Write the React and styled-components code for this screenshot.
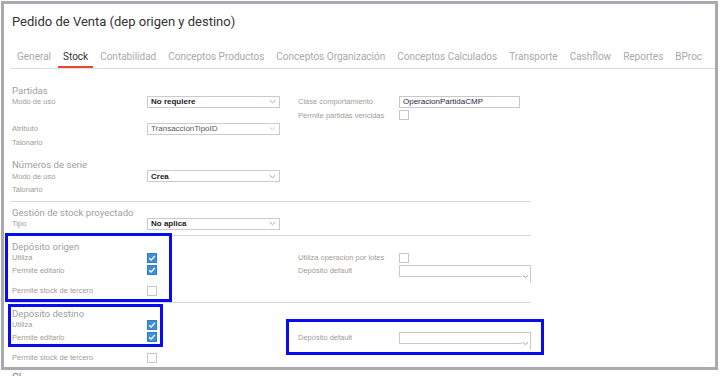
import React from "react";
import styled, { createGlobalStyle } from "styled-components";

const GlobalStyle = createGlobalStyle`
  html, body {
    margin: 0;
    padding: 0;
    background: #fff;
    overflow: hidden;
    font-family: Roboto, "Liberation Sans", sans-serif;
  }
`;

const TABS = [
  "General",
  "Stock",
  "Contabilidad",
  "Conceptos Productos",
  "Conceptos Organización",
  "Conceptos Calculados",
  "Transporte",
  "Cashflow",
  "Reportes",
  "BProc",
];

const Chevron = ({ light }) => (
  <svg width="7" height="5" viewBox="0 0 7 5">
    <path
      d="M0.8 1.2 L3.5 3.7 L6.2 1.2"
      fill="none"
      stroke={light ? "#b9cde4" : "#7ea8d8"}
      strokeWidth="1"
    />
  </svg>
);

const Check = () => (
  <svg width="8" height="8" viewBox="0 0 8 8">
    <path d="M1.2 4.2 L3.2 6 L6.9 1.9" fill="none" stroke="#fff" strokeWidth="1.3" />
  </svg>
);

const App = () => {
  return (
    <>
      <GlobalStyle />
      <Frame>
        <Title>Pedido de Venta (dep origen y destino)</Title>

        <TabList>
          {TABS.map((t) => (
            <Tab key={t} $active={t === "Stock"}>
              {t}
            </Tab>
          ))}
        </TabList>

        <Content>
          <Section>
            <SectionTitle>Partidas</SectionTitle>
            <Rows>
              <FieldRow>
                <Label>Modo de uso</Label>
                <Select $strong>
                  No requiere
                  <Chevron />
                </Select>
                <span />
                <Label>Clase comportamiento</Label>
                <TextInput>OperacionPartidaCMP</TextInput>
              </FieldRow>
              <FieldRow>
                <span />
                <span />
                <span />
                <Label>Permite partidas vencidas</Label>
                <Checkbox />
              </FieldRow>
              <FieldRow>
                <Label>Atributo</Label>
                <Select $muted>
                  TransaccionTipoID
                  <Chevron light />
                </Select>
              </FieldRow>
              <FieldRow>
                <Label>Talonario</Label>
              </FieldRow>
            </Rows>
          </Section>

          <Section $divided>
            <SectionTitle>Números de serie</SectionTitle>
            <Rows>
              <FieldRow>
                <Label>Modo de uso</Label>
                <Select $strong>
                  Crea
                  <Chevron />
                </Select>
              </FieldRow>
              <FieldRow>
                <Label>Talonario</Label>
              </FieldRow>
            </Rows>
          </Section>

          <Section $divided>
            <SectionTitle>Gestión de stock proyectado</SectionTitle>
            <Rows>
              <FieldRow>
                <Label>Tipo</Label>
                <Select $strong>
                  No aplica
                  <Chevron />
                </Select>
              </FieldRow>
            </Rows>
          </Section>

          <Section $divided>
            <SectionTitle>Depósito origen</SectionTitle>
            <Rows>
              <FieldRow>
                <Label>Utiliza</Label>
                <Checkbox $checked>
                  <Check />
                </Checkbox>
                <span />
                <Label>Utiliza operacion por lotes</Label>
                <Checkbox />
              </FieldRow>
              <FieldRow $top>
                <Label>Permite editarlo</Label>
                <Checkbox $checked>
                  <Check />
                </Checkbox>
                <span />
                <Label>Depósito default</Label>
                <TallSelect>
                  <TallBox />
                  <TallChevron>
                    <Chevron />
                  </TallChevron>
                </TallSelect>
              </FieldRow>
              <FieldRow>
                <Label>Permite stock de tercero</Label>
                <Checkbox />
              </FieldRow>
            </Rows>
          </Section>

          <Section>
            <SectionTitle>Depósito destino</SectionTitle>
            <Rows>
              <FieldRow>
                <Label>Utiliza</Label>
                <Checkbox $checked>
                  <Check />
                </Checkbox>
              </FieldRow>
              <FieldRow $top>
                <Label>Permite editarlo</Label>
                <Checkbox $checked>
                  <Check />
                </Checkbox>
                <span />
                <Label>Depósito default</Label>
                <TallSelect>
                  <TallBox />
                  <TallChevron>
                    <Chevron />
                  </TallChevron>
                </TallSelect>
              </FieldRow>
              <FieldRow>
                <Label>Permite stock de tercero</Label>
                <Checkbox />
              </FieldRow>
            </Rows>
          </Section>
        </Content>

        {/* annotation boxes drawn over the form */}
        <Highlight $x={1} $y={229} $w={167} $h={69} />
        <Highlight $x={4} $y={300} $w={155} $h={43} />
        <Highlight $x={282} $y={315} $w={258} $h={36} />
      </Frame>
      <NextLabel>Cl</NextLabel>
    </>
  );
};

// Styled Components
const Frame = styled.div`
  position: relative;
  margin: 1px 0 0 1px;
  width: 717px;
  height: 369px;
  box-sizing: border-box;
  border: 3px solid #a9a9b1;
  padding: 10px 0 0 6px;
  overflow: hidden;
  background: #fff;
`;

const Title = styled.div`
  margin-left: 2px;
  font-family: Roboto, sans-serif;
  font-size: 13px;
  line-height: 16px;
  color: #333;
`;

const TabList = styled.div`
  display: flex;
  gap: 2px;
  margin-top: 20px;
  padding-left: 2px;
  border-bottom: 1px solid #dedede;
`;

const Tab = styled.div`
  padding: 0 5px 3px;
  font-family: Roboto, sans-serif;
  font-size: 10px;
  line-height: 13px;
  white-space: nowrap;
  color: ${({ $active }) => ($active ? "#333" : "#a9a9a9")};
  border-bottom: 2px solid ${({ $active }) => ($active ? "#e64a2e" : "transparent")};
`;

const Content = styled.div`
  margin-top: 11px;
  width: 521px;
`;

const Section = styled.div`
  padding: 4.5px 0 5.5px 2px;
  border-bottom: 1px solid ${({ $divided }) => ($divided ? "#d6d6d6" : "transparent")};
`;

const SectionTitle = styled.div`
  font-family: Roboto, sans-serif;
  font-size: 9.6px;
  line-height: 11px;
  color: #a0a0a0;
`;

const Rows = styled.div`
  display: flex;
  flex-direction: column;
  gap: 1.5px;
`;

const FieldRow = styled.div`
  display: grid;
  grid-template-columns: 135px 133px 18px 101px 132px;
  min-height: 12px;
  align-items: ${({ $top }) => ($top ? "start" : "center")};
`;

const Label = styled.div`
  font-family: "Liberation Sans", Arial, sans-serif;
  font-size: 7.5px;
  line-height: 11px;
  color: #a49c94;
  white-space: nowrap;
`;

const Select = styled.div`
  display: flex;
  align-items: center;
  justify-content: space-between;
  height: 12px;
  box-sizing: border-box;
  padding: 0 3px 0 3px;
  border: 1px solid #cbcbcb;
  font-family: "Liberation Sans", Arial, sans-serif;
  font-size: 8px;
  font-weight: ${({ $strong }) => ($strong ? 700 : 400)};
  color: ${({ $muted }) => ($muted ? "#5a5a5a" : "#222")};
`;

const TextInput = styled.div`
  width: 121px;
  height: 12px;
  box-sizing: border-box;
  padding: 0 3px;
  border: 1px solid #c8c8c8;
  font-family: "Liberation Sans", Arial, sans-serif;
  font-size: 8px;
  line-height: 10px;
  color: #1d2a4a;
`;

const Checkbox = styled.div`
  display: flex;
  align-items: center;
  justify-content: center;
  width: 10px;
  height: 10px;
  box-sizing: border-box;
  border: 1px solid ${({ $checked }) => ($checked ? "#2f7fc6" : "#c6c6c6")};
  background: ${({ $checked }) => ($checked ? "#3d8fd8" : "#fff")};
`;

const TallSelect = styled.div`
  display: flex;
  align-items: flex-start;
  width: 132px;
  height: 18px;
  box-sizing: border-box;
  border-top: 1px solid #cacaca;
  border-right: 1px solid #cacaca;
`;

const TallBox = styled.div`
  flex: 1;
  height: 10px;
  border-left: 1px solid #cacaca;
  border-bottom: 1px solid #cacaca;
`;

const TallChevron = styled.div`
  display: flex;
  margin: 8px 1px 0 0;
`;

const Highlight = styled.div`
  position: absolute;
  left: ${({ $x }) => $x}px;
  top: ${({ $y }) => $y}px;
  width: ${({ $w }) => $w}px;
  height: ${({ $h }) => $h}px;
  box-sizing: border-box;
  border: 3px solid #0b0bf2;
  pointer-events: none;
`;

const NextLabel = styled.div`
  margin: 2px 0 0 12px;
  font-family: Roboto, sans-serif;
  font-size: 10.5px;
  line-height: 12px;
  color: #777;
`;

export default App;
